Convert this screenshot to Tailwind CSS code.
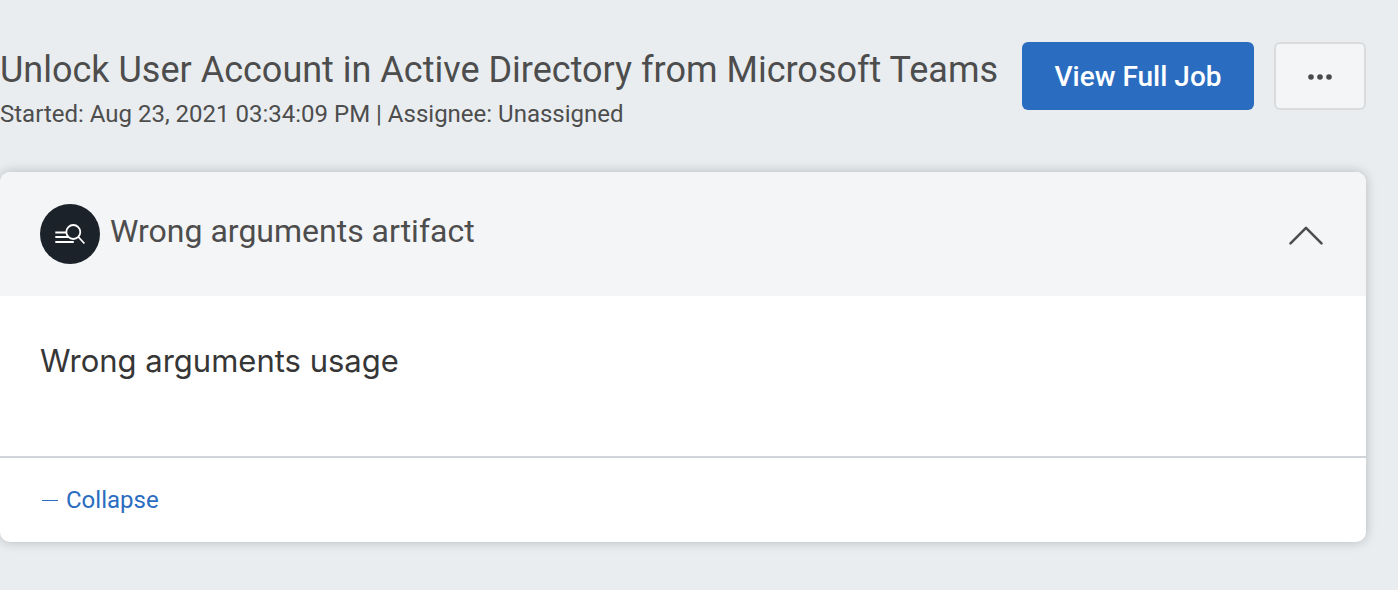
<!DOCTYPE html>
<html lang="en">
<head>
<meta charset="utf-8">
<meta name="viewport" content="width=device-width, initial-scale=1">
<title>Job details</title>
<script src="https://cdn.jsdelivr.net/npm/@tailwindcss/browser@4"></script>
</head>
<body class="min-h-screen bg-[#e9edf0] pr-8 font-['Roboto',sans-serif] text-[#4d4d4d]">
<header class="flex items-start justify-between pt-[42px]">
  <div class="pt-1">
    <h1 class="whitespace-nowrap text-[36px] leading-[48px]">Unlock User Account in Active Directory from Microsoft Teams</h1>
    <p class="pt-1 text-2xl leading-8">Started: Aug 23, 2021 03:34:09 PM | Assignee: Unassigned</p>
  </div>
  <div class="flex shrink-0 gap-5">
    <button type="button" class="h-[68px] w-[232px] rounded-md bg-[#2a6dc0] pt-0.5 text-[28px] font-medium text-white">View Full Job</button>
    <button type="button" aria-label="More actions" class="flex h-[68px] w-[92px] items-center justify-center rounded-md border-2 border-[#dadbdc] bg-[#f4f5f7] pt-0.5">
      <svg class="h-6 w-6" viewBox="0 0 24 24" fill="#4a4a4a"><circle cx="3" cy="12" r="2.8"/><circle cx="12" cy="12" r="2.8"/><circle cx="21" cy="12" r="2.8"/></svg>
    </button>
  </div>
</header>
<main class="mt-[42px] overflow-hidden rounded-[10px] bg-white shadow-[0_0_12px_rgba(0,0,0,0.22)]">
  <div class="flex h-[124px] items-center bg-[#f4f5f7] px-10">
    <svg class="h-[60px] w-[60px]" viewBox="0 0 60 60" fill="none" stroke="white" stroke-width="1.8"><circle cx="30" cy="30" r="30" fill="#1b222a" stroke="none"/><circle cx="33.3" cy="28" r="7"/><path d="M38.4 33l6 6.5M15.3 28.5h11M15.3 33h13.5M15.3 38h18.5"/></svg>
    <h2 class="pb-1.5 pl-[10px] text-[32px] leading-10">Wrong arguments artifact</h2>
    <button type="button" aria-label="Collapse section" class="ml-auto">
      <svg class="h-10 w-10" viewBox="0 0 40 40" fill="none" stroke="#4d4d4d" stroke-width="2.6" stroke-linecap="round" stroke-linejoin="round"><path d="M4.500 29.300L20 13.800L35.500 29.300"/></svg>
    </button>
  </div>
  <p class="h-40 px-10 pt-[45px] font-['Inter',sans-serif] text-[31px] leading-10 text-[#363636]">Wrong arguments usage</p>
  <div class="flex h-[86px] items-center border-t-2 border-[#d1d5d9] px-10">
    <button type="button" class="flex items-center gap-2 text-2xl text-[#2a6dc0]"><svg class="h-[18px] w-[18px]" viewBox="0 0 18 18" fill="currentColor"><path d="M2 9h16v1H2z"/></svg>Collapse</button>
  </div>
</main>
</body>
</html>
